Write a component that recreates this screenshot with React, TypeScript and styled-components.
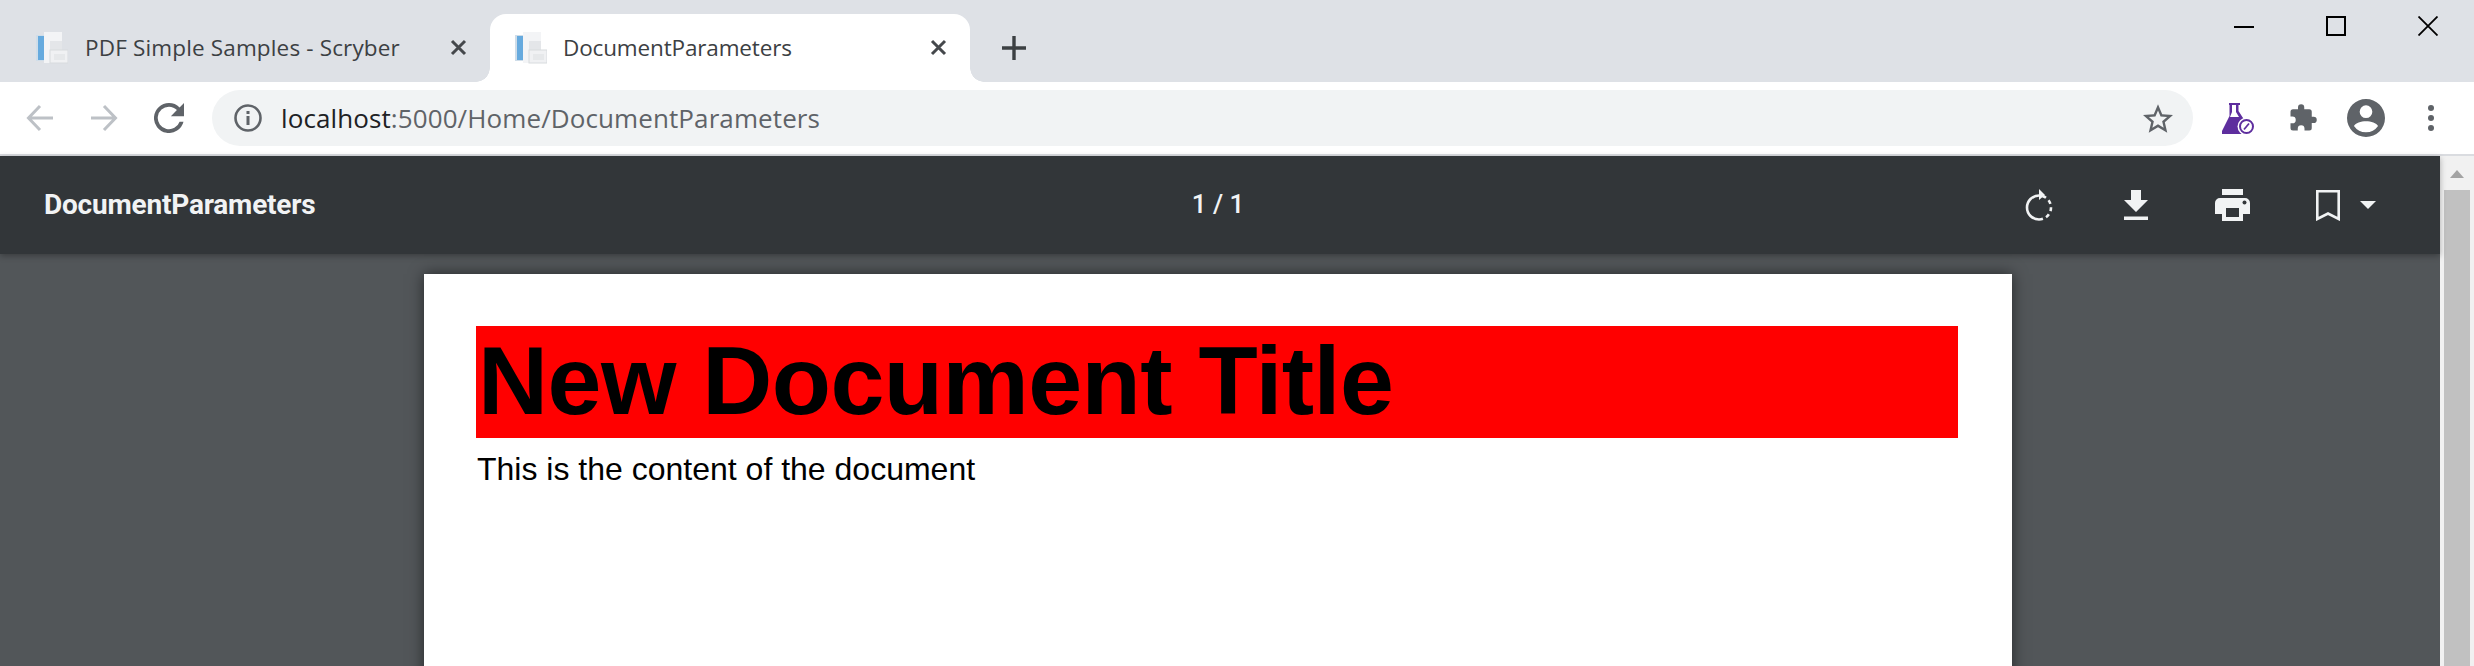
import styled, { createGlobalStyle } from "styled-components";
import type { ReactNode } from "react";

const Global = createGlobalStyle`
  html, body { margin: 0; padding: 0; overflow: hidden; background: #525659; }
  * { box-sizing: border-box; }
`;

const Window = styled.div`
  width: 2474px;
  height: 666px;
  display: flex;
  flex-direction: column;
  overflow: hidden;
  font-family: "Open Sans", "Liberation Sans", sans-serif;
`;

const TabStrip = styled.div`
  height: 82px;
  flex: none;
  display: flex;
  align-items: flex-end;
  background: #dee1e6;
`;

const Tab = styled.div<{ $active?: boolean }>`
  position: relative;
  display: flex;
  align-items: center;
  width: ${({ $active }) => ($active ? 480 : 490)}px;
  height: 68px;
  padding: 0 23px 1px ${({ $active }) => ($active ? 25 : 36)}px;
  gap: ${({ $active }) => ($active ? 16 : 17)}px;
  border-radius: 16px 16px 0 0;
  background: ${({ $active }) => ($active ? "#ffffff" : "transparent")};

  /* the flared feet of the active tab */
  ${({ $active }) =>
    $active &&
    `
    &::before, &::after {
      content: "";
      position: absolute;
      bottom: 0;
      width: 14px;
      height: 14px;
    }
    &::before {
      left: -14px;
      background: radial-gradient(circle at 0 0, transparent 13.5px, #fff 14px);
    }
    &::after {
      right: -14px;
      background: radial-gradient(circle at 100% 0, transparent 13.5px, #fff 14px);
    }
  `}
`;

const TabTitle = styled.span<{ $active?: boolean }>`
  flex: 1;
  font-size: 22.5px;
  letter-spacing: ${({ $active }) => ($active ? "-0.15px" : "0.15px")};
  color: #3c4043;
  white-space: nowrap;
`;

const NewTab = styled.div`
  display: flex;
  height: 68px;
  align-items: center;
  margin-left: 32px;
`;

const WindowControls = styled.div`
  margin-left: auto;
  align-self: flex-start;
  display: flex;
  gap: 72px;
  padding: 16px 36px 0 0;
`;

const Toolbar = styled.div`
  height: 74px;
  flex: none;
  display: flex;
  align-items: flex-start;
  padding-top: 8px;
  background: #fff;
  border-bottom: 2px solid #dadce0;
`;

const NavButtons = styled.div`
  display: flex;
  align-items: center;
  gap: 36px;
  height: 56px;
  padding-left: 26px;
  width: 212px;
`;

const Omnibox = styled.div`
  width: 1981px;
  height: 56px;
  display: flex;
  align-items: center;
  padding: 0 20px 0 22px;
  border-radius: 28px;
  background: #f1f3f4;
`;

const Url = styled.div`
  flex: 1;
  margin-left: 19px;
  font-size: 26px;
  letter-spacing: 0.1px;
  color: #5f6368;
  white-space: nowrap;
`;

const Host = styled.span`
  color: #202124;
`;

const ToolIcons = styled.div`
  display: flex;
  align-items: center;
  height: 56px;
  padding-left: 29px;
`;

const ToolSlot = styled.div<{ $ml?: number }>`
  display: flex;
  margin-left: ${({ $ml = 0 }) => $ml}px;
`;

const Body = styled.div`
  flex: 1;
  min-height: 0;
  display: flex;
`;

const Viewer = styled.div`
  width: 2440px;
  display: flex;
  flex-direction: column;
  background: #525659;
`;

const PdfBar = styled.div`
  position: relative;
  z-index: 1;
  height: 98px;
  flex: none;
  display: grid;
  grid-template-columns: 1fr auto 1fr;
  align-items: center;
  padding: 0 0 0 44px;
  background: #323639;
  box-shadow: 0 2px 6px rgba(0, 0, 0, 0.3);
`;

const PdfTitle = styled.div`
  padding-bottom: 2px;
  font-family: Roboto, "Liberation Sans", sans-serif;
  font-size: 28px;
  font-weight: 700;
  letter-spacing: -0.2px;
  color: #f1f3f4;
`;

const PageCount = styled.div`
  font-family: Roboto, "Liberation Sans", sans-serif;
  font-size: 26px;
  font-weight: 500;
  color: #f1f3f4;
  padding: 0 48px 2px 0;
`;

const PdfActions = styled.div`
  display: flex;
  align-items: center;
  justify-content: flex-end;
  padding-right: 64px;
`;

const PdfAction = styled.div<{ $ml?: number }>`
  display: flex;
  margin-left: ${({ $ml = 0 }) => $ml}px;
`;

const Canvas = styled.div`
  flex: 1;
  min-height: 0;
  overflow: hidden;
  padding: 20px 0 0 424px;
`;

const Page = styled.div`
  width: 1588px;
  height: 500px;
  padding: 52px 54px 0 52px;
  background: #fff;
  box-shadow: 0 0 14px rgba(0, 0, 0, 0.55);
  font-family: "Liberation Sans", Arial, sans-serif;
  color: #000;
`;

const DocTitle = styled.h1`
  margin: 0;
  height: 112px;
  padding-left: 2px;
  background: #ff0000;
  font-size: 97px;
  line-height: 110px;
  letter-spacing: -0.55px;
  font-weight: 700;
  white-space: nowrap;
`;

const DocText = styled.p`
  margin: 13px 0 0;
  padding-left: 1px;
  font-size: 32px;
  line-height: 36px;
`;

const Scrollbar = styled.div`
  position: relative;
  width: 34px;
  background: #f1f1f1;
  padding: 34px 4px 0;
`;

const ScrollThumb = styled.div`
  height: 100%;
  background: #c1c1c1;
`;

const ScrollArrow = styled.div`
  position: absolute;
  top: 14px;
  left: 10px;
  width: 0;
  height: 0;
  border-left: 7px solid transparent;
  border-right: 7px solid transparent;
  border-bottom: 8px solid #a3a3a3;
`;

function Icon({ w, h, box, children }: { w: number; h: number; box: string; children: ReactNode }) {
  return (
    <svg width={w} height={h} viewBox={box} style={{ display: "block", flex: "none" }}>
      {children}
    </svg>
  );
}

function Favicon() {
  return (
    <Icon w={32} h={32} box="0 0 32 32">
      <rect x="0" y="3" width="8" height="26" fill="#cfdde9" />
      <rect x="2" y="4" width="6" height="24" fill="#66aade" />
      <rect x="8" y="0" width="18" height="31" fill="#f3f4f6" />
      <rect x="14" y="9" width="12" height="9" fill="#e4e6e9" />
      <rect x="14" y="18" width="18" height="13" fill="#f0f1f3" stroke="#d8dbde" />
      <rect x="18" y="22" width="11" height="6" fill="#e6e8ea" />
    </Icon>
  );
}

function CloseX({ color }: { color: string }) {
  return (
    <Icon w={17} h={17} box="0 0 17 17">
      <path d="M2 2 15 15M15 2 2 15" stroke={color} strokeWidth="3" fill="none" />
    </Icon>
  );
}

export default function App() {
  return (
    <Window>
      <Global />
      <TabStrip>
        <Tab>
          <Favicon />
          <TabTitle>PDF Simple Samples - Scryber</TabTitle>
          <CloseX color="#45484c" />
        </Tab>
        <Tab $active>
          <Favicon />
          <TabTitle $active>DocumentParameters</TabTitle>
          <CloseX color="#45484c" />
        </Tab>
        <NewTab>
          <Icon w={24} h={24} box="0 0 24 24">
            <path d="M12 0V24M0 12H24" stroke="#3c4043" strokeWidth="3.4" fill="none" />
          </Icon>
        </NewTab>
        <WindowControls>
          <Icon w={20} h={20} box="0 0 20 20">
            <path d="M0 11H20" stroke="#000" strokeWidth="2" />
          </Icon>
          <Icon w={20} h={20} box="0 0 20 20">
            <rect x="1" y="1" width="18" height="18" fill="none" stroke="#000" strokeWidth="2" />
          </Icon>
          <Icon w={20} h={20} box="0 0 20 20">
            <path d="M0.5 0.5 19.5 19.5M19.5 0.5 0.5 19.5" stroke="#000" strokeWidth="1.8" fill="none" />
          </Icon>
        </WindowControls>
      </TabStrip>

      <Toolbar>
        <NavButtons>
          <Icon w={28} h={28} box="0 0 28 28">
            <path d="M27 14H3M14 2 2.5 14 14 26" stroke="#bdc1c6" strokeWidth="3" fill="none" />
          </Icon>
          <Icon w={28} h={28} box="0 0 28 28">
            <path d="M1 14H25M14 2 25.5 14 14 26" stroke="#bdc1c6" strokeWidth="3" fill="none" />
          </Icon>
          <Icon w={30} h={30} box="4 4 16 16">
            <path
              d="M17.65 6.35A7.96 7.96 0 0 0 12 4a8 8 0 1 0 7.73 10h-2.08A6 6 0 1 1 12 6c1.66 0 3.14.69 4.22 1.78L13 11h7V4l-2.35 2.35z"
              fill="#5f6368"
            />
          </Icon>
        </NavButtons>
        <Omnibox>
          <Icon w={28} h={28} box="0 0 28 28">
            <circle cx="14" cy="14" r="12.5" fill="none" stroke="#5f6368" strokeWidth="2.6" />
            <rect x="12.5" y="12" width="3" height="9" fill="#5f6368" />
            <rect x="12.5" y="7" width="3" height="3" fill="#5f6368" />
          </Icon>
          <Url>
            <Host>localhost</Host>:5000/Home/DocumentParameters
          </Url>
          <Icon w={30} h={29} box="2 2 20 19">
            <path
              d="M22 9.24l-7.19-.62L12 2 9.19 8.63 2 9.24l5.46 4.73L5.82 21 12 17.27 18.18 21l-1.63-7.03L22 9.24zM12 15.4l-3.76 2.27 1-4.28-3.32-2.88 4.38-.38L12 6.1l1.71 4.04 4.38.38-3.32 2.88 1 4.28L12 15.4z"
              fill="#5f6368"
            />
          </Icon>
        </Omnibox>
        <ToolIcons>
          <ToolSlot>
            <Icon w={32} h={32} box="0 0 32 32">
              <path d="M7 1H18V3H16.5V9L22 17.5 24 27V32H0V29L7.5 14V3H7Z" fill="#5e2e9e" />
              <path d="M10 3H14V10L17 15H8L10 10Z" fill="#fff" />
              <circle cx="24.5" cy="24.5" r="9" fill="#fff" />
              <circle cx="24.5" cy="24.5" r="6.5" fill="none" stroke="#5e2e9e" strokeWidth="2" />
              <path d="M22 27.5 27 21.5" stroke="#5e2e9e" strokeWidth="1.8" />
            </Icon>
          </ToolSlot>
          <ToolSlot $ml={34}>
            <Icon w={30} h={30} box="0 0 24 24">
              <path
                d="M20.5 11H19V7a2 2 0 0 0-2-2h-4V3.5a2.5 2.5 0 0 0-5 0V5H4a2 2 0 0 0-2 2v3.8h1.5a2.7 2.7 0 0 1 0 5.4H2V20a2 2 0 0 0 2 2h3.8v-1.5a2.7 2.7 0 0 1 5.4 0V22H17a2 2 0 0 0 2-2v-4h1.5a2.5 2.5 0 0 0 0-5z"
                fill="#5f6368"
              />
            </Icon>
          </ToolSlot>
          <ToolSlot $ml={29}>
            <Icon w={38} h={38} box="0 0 24 24">
              <path
                d="M12 0a12 12 0 1 0 0 24 12 12 0 0 0 0-24zm0 4a4 4 0 1 1 0 8 4 4 0 0 1 0-8zm0 17a9.3 9.3 0 0 1-7.6-4c.9-1.9 4.4-3 7.6-3s6.7 1.1 7.6 3A9.3 9.3 0 0 1 12 21z"
                fill="#5f6368"
              />
            </Icon>
          </ToolSlot>
          <ToolSlot $ml={43}>
            <Icon w={6} h={26} box="0 0 6 26">
              <circle cx="3" cy="3" r="3" fill="#5f6368" />
              <circle cx="3" cy="13" r="3" fill="#5f6368" />
              <circle cx="3" cy="23" r="3" fill="#5f6368" />
            </Icon>
          </ToolSlot>
        </ToolIcons>
      </Toolbar>

      <Body>
        <Viewer>
          <PdfBar>
            <PdfTitle>DocumentParameters</PdfTitle>
            <PageCount>1 / 1</PageCount>
            <PdfActions>
              <PdfAction>
                <Icon w={30} h={32} box="0 0 30 32">
                  <path d="M15 0 21 6 15 11Z" fill="#f1f3f4" />
                  <path d="M15 6.5A12 12 0 1 0 15 30.5" stroke="#f1f3f4" strokeWidth="2.6" fill="none" />
                  <path
                    d="M15 30.5A12 12 0 0 0 15 6.5"
                    stroke="#f1f3f4"
                    strokeWidth="2.6"
                    fill="none"
                    strokeDasharray="4 3.5"
                  />
                </Icon>
              </PdfAction>
              <PdfAction $ml={70}>
                <Icon w={24} h={30} box="0 0 24 30">
                  <path d="M7 0H17V10H24L12 22 0 10H7Z" fill="#f1f3f4" />
                  <rect x="0" y="26.5" width="24" height="3.5" fill="#f1f3f4" />
                </Icon>
              </PdfAction>
              <PdfAction $ml={67}>
                <Icon w={35} h={32} box="0 0 35 32">
                  <rect x="7" y="0" width="21" height="6" fill="#f1f3f4" />
                  <path d="M5 9H30A5 5 0 0 1 35 14V25H28V32H7V25H0V14A5 5 0 0 1 5 9Z" fill="#f1f3f4" />
                  <rect x="11" y="19" width="13" height="9" fill="#323639" />
                  <circle cx="29.5" cy="13.5" r="2" fill="#323639" />
                </Icon>
              </PdfAction>
              <PdfAction $ml={66}>
                <Icon w={24} h={31} box="0 0 24 31">
                  <path d="M1.3 1.3H22.7V29L12 23.5 1.3 29Z" fill="none" stroke="#f1f3f4" strokeWidth="2.6" />
                </Icon>
              </PdfAction>
              <PdfAction $ml={20}>
                <Icon w={16} h={8} box="0 0 16 8">
                  <path d="M0 0H16L8 8Z" fill="#f1f3f4" />
                </Icon>
              </PdfAction>
            </PdfActions>
          </PdfBar>
          <Canvas>
            <Page>
              <DocTitle>New Document Title</DocTitle>
              <DocText>This is the content of the document</DocText>
            </Page>
          </Canvas>
        </Viewer>
        <Scrollbar>
          <ScrollArrow />
          <ScrollThumb />
        </Scrollbar>
      </Body>
    </Window>
  );
}
